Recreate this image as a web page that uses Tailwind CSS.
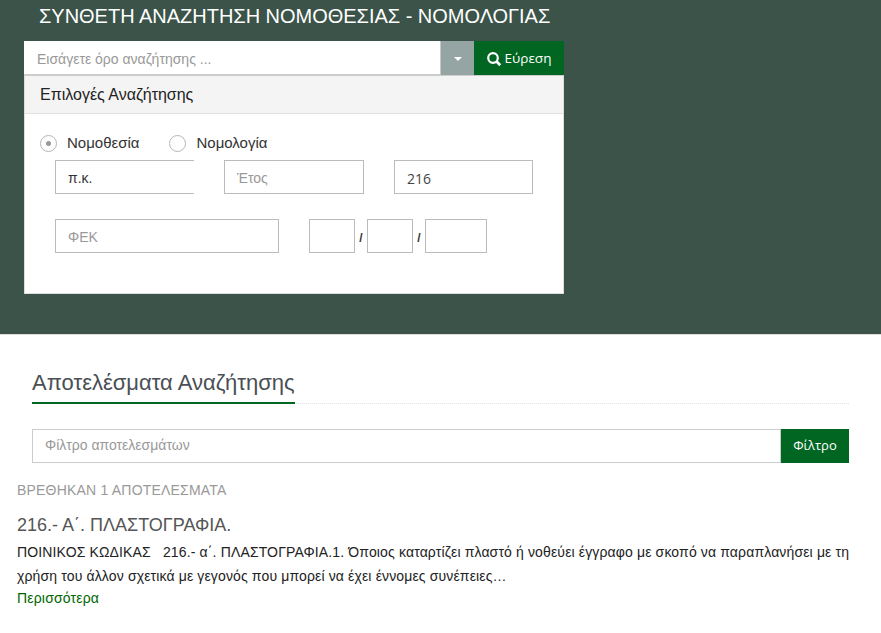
<!DOCTYPE html>
<html lang="el">
<head>
    <meta charset="UTF-8">
    <meta name="viewport" content="width=device-width, initial-scale=1.0">
    <title>Σύνθετη Αναζήτηση</title>
    <script src="https://cdn.jsdelivr.net/npm/@tailwindcss/browser@4"></script>
</head>
<body class="bg-white font-['Liberation_Sans',sans-serif] text-sm text-[#333]">
    <!-- search area -->
    <section class="h-[335px] bg-[#3b5348] pl-6 border-b border-[#dddddd]">
        <h1 class="pl-[15px] h-[41px] pt-[3px] text-xl leading-[26px] tracking-[-0.02px] text-white whitespace-nowrap">ΣΥΝΘΕΤΗ ΑΝΑΖΗΤΗΣΗ ΝΟΜΟΘΕΣΙΑΣ - ΝΟΜΟΛΟΓΙΑΣ</h1>
        <div class="w-[540px]">
            <div class="flex h-[34px]">
                <input type="text" placeholder="Εισάγετε όρο αναζήτησης ..." class="flex-1 min-w-0 bg-white px-[13px] pt-[2px] border-b border-[#cccccc] text-sm outline-none placeholder:text-[#999999]">
                <div class="w-[34px] bg-[#95a5a3] border-l border-[#c8c8c8] flex items-center justify-center pt-[1px]">
                    <span class="w-0 h-0 border-x-4 border-x-transparent border-t-4 border-t-white"></span>
                </div>
                <button class="w-[90px] bg-[#006622] text-white flex items-center justify-center gap-1 pt-[1px] font-['Open_Sans',sans-serif] text-[13.5px]">
                    <svg width="14" height="14" viewBox="0 0 14 14" fill="none" stroke="white" stroke-width="2.2"><circle cx="6" cy="6" r="4.8"/><path d="M9.6 9.6l3.6 3.6" stroke-width="2.8"/></svg>
                    Εύρεση
                </button>
            </div>
            <div class="bg-white border border-[#dddddd] border-t-[#cccccc] h-[219px]">
                <div class="h-[38px] bg-[#f4f4f4] border-b border-[#e2e2e2] pl-[15px] flex items-center text-base text-[#222]">Επιλογές Αναζήτησης</div>
                <div class="pl-[15px] pt-[20px]">
                    <div class="flex items-center h-[18px]">
                        <span class="w-[17px] h-[17px] rounded-full border border-[#b5b5b5] flex items-center justify-center"><span class="w-[5px] h-[5px] rounded-full bg-[#999999]"></span></span>
                        <span class="ml-[10px] text-[15px]">Νομοθεσία</span>
                        <span class="ml-[30px] w-[17px] h-[17px] rounded-full border border-[#b5b5b5]"></span>
                        <span class="ml-[10px] text-[15px]">Νομολογία</span>
                    </div>
                    <div class="flex mt-[8px] ml-[15px]">
                        <input type="text" value="π.κ." class="w-[139px] h-[34px] border border-r-0 border-[#bbbbbb] pl-3 pt-[2px] text-sm outline-none">
                        <input type="text" placeholder="Έτος" class="ml-[30px] w-[140px] h-[34px] border border-[#bbbbbb] pl-3 pt-[2px] text-sm outline-none placeholder:text-[#999999]">
                        <input type="text" value="216" class="ml-[30px] w-[139px] h-[34px] border border-[#bbbbbb] pl-3 pt-[2px] font-['Open_Sans',sans-serif] text-sm text-[#444] outline-none">
                    </div>
                    <div class="flex items-center mt-[25px] ml-[15px]">
                        <input type="text" placeholder="ΦΕΚ" class="w-[224px] h-[34px] border border-[#bbbbbb] pl-3 pt-[2px] text-sm outline-none placeholder:text-[#999999]">
                        <input type="text" class="ml-[30px] w-[46px] h-[34px] border border-[#bbbbbb] outline-none">
                        <span class="w-3 text-center font-bold text-xs mt-[4px]">/</span>
                        <input type="text" class="w-[46px] h-[34px] border border-[#bbbbbb] outline-none">
                        <span class="w-3 text-center font-bold text-xs mt-[4px]">/</span>
                        <input type="text" class="w-[62px] h-[34px] border border-[#bbbbbb] outline-none">
                    </div>
                </div>
            </div>
        </div>
    </section>

    <!-- results -->
    <section class="pl-[17px] pt-[34px] w-[849px] h-[298px]">
        <div class="ml-[15px] border-b border-dotted border-[#e5e5e5] h-[35px]">
            <h2 class="inline-block h-[35px] border-b-2 border-[#006622] text-[22px] leading-[28px] text-[#4a4f55]">Αποτελέσματα Αναζήτησης</h2>
        </div>
        <div class="flex ml-[15px] mt-[25px] h-[34px]">
            <input type="text" placeholder="Φίλτρο αποτελεσμάτων" class="flex-1 min-w-0 border border-[#cccccc] pl-3 pb-[2px] text-sm outline-none placeholder:text-[#999999]">
            <button class="w-[68px] bg-[#006622] text-white pb-[1px] font-['Open_Sans',sans-serif] text-[13px]">Φίλτρο</button>
        </div>
        <p class="mt-[19px] leading-4 tracking-[0.2px] text-[#999999]">ΒΡΕΘΗΚΑΝ 1 ΑΠΟΤΕΛΕΣΜΑΤΑ</p>
        <h3 class="mt-[15px] text-lg leading-6 text-[#555]">216.- Α΄. ΠΛΑΣΤΟΓΡΑΦΙΑ.</h3>
        <p class="mt-[3px] -mr-4 leading-6 tracking-[0.14px] text-[#222] whitespace-pre-wrap">ΠΟΙΝΙΚΟΣ ΚΩΔΙΚΑΣ   216.- α΄. ΠΛΑΣΤΟΓΡΑΦΙΑ.1. Όποιος καταρτίζει πλαστό ή νοθεύει έγγραφο με σκοπό να παραπλανήσει με τη
χρήση του άλλον σχετικά με γεγονός που μπορεί να έχει έννομες συνέπειες…</p>
        <a href="#" class="block leading-5 tracking-[0.18px] text-[#006600]">Περισσότερα</a>
    </section>
</body>
</html>
